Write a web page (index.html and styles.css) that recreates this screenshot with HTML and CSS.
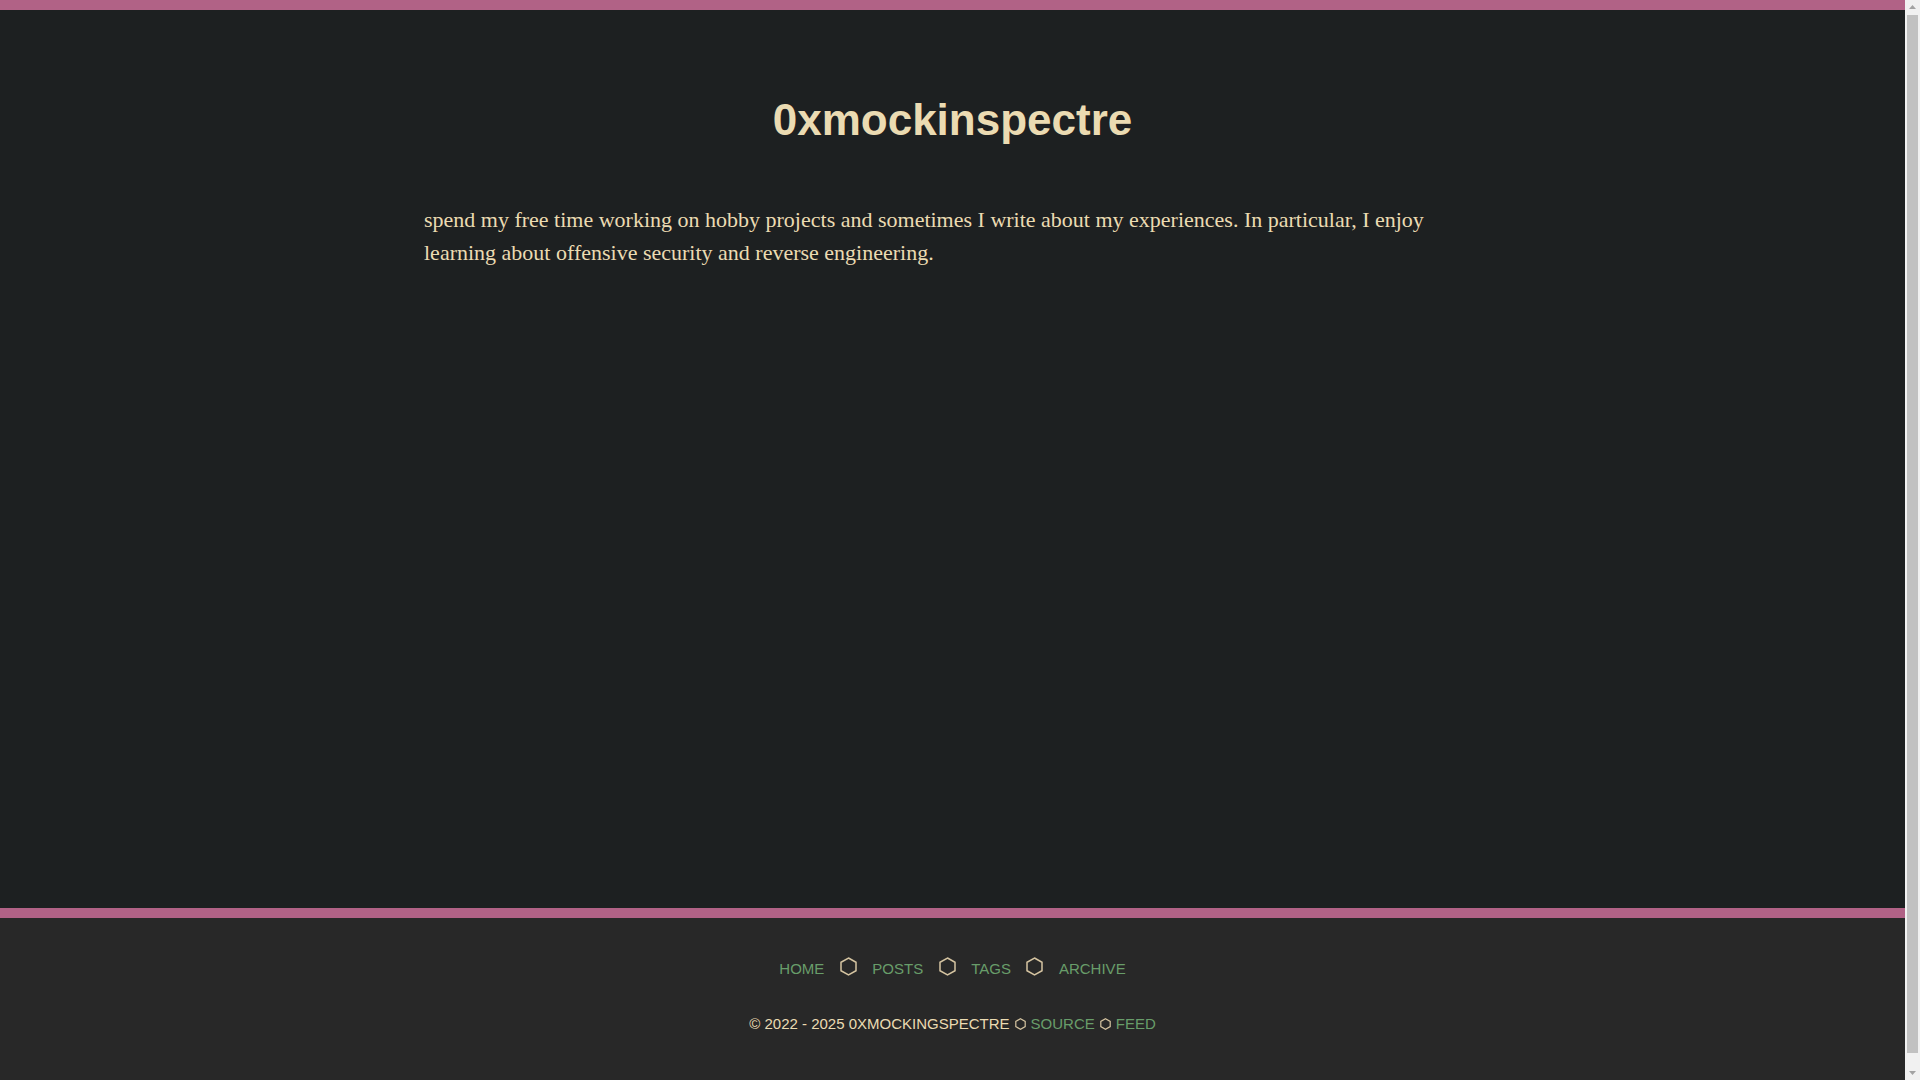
FILE: index.html
```html
<!DOCTYPE html>
<html lang="en">
<head>
<meta charset="utf-8">
<title>0xmockinspectre</title>
<link rel="stylesheet" href="styles.css">
</head>
<body>
<main class="main">
  <div class="container">
    <h1 class="site-title">0xmockinspectre</h1>
    <p class="intro">spend my free time working on hobby projects and sometimes I write about my experiences. In particular, I enjoy learning about offensive security and reverse engineering.</p>
  </div>
</main>
<footer class="footer">
  <nav class="nav">
    <a class="link" href="#">HOME</a>
    <svg class="hex hex-big" viewBox="0 0 17 19" aria-hidden="true"><polygon points="8.5,1 16,5.25 16,13.75 8.5,18 1,13.75 1,5.25"/></svg>
    <a class="link" href="#">POSTS</a>
    <svg class="hex hex-big" viewBox="0 0 17 19" aria-hidden="true"><polygon points="8.5,1 16,5.25 16,13.75 8.5,18 1,13.75 1,5.25"/></svg>
    <a class="link" href="#">TAGS</a>
    <svg class="hex hex-big" viewBox="0 0 17 19" aria-hidden="true"><polygon points="8.5,1 16,5.25 16,13.75 8.5,18 1,13.75 1,5.25"/></svg>
    <a class="link" href="#">ARCHIVE</a>
  </nav>
  <div class="copyright">
    <span class="copy-text">© 2022 - 2025 0XMOCKINGSPECTRE</span>
    <svg class="hex hex-small" viewBox="0 0 11 12" aria-hidden="true"><polygon points="5.5,0.8 10.2,3.4 10.2,8.6 5.5,11.2 0.8,8.6 0.8,3.4"/></svg>
    <a class="link" href="#">SOURCE</a>
    <svg class="hex hex-small" viewBox="0 0 11 12" aria-hidden="true"><polygon points="5.5,0.8 10.2,3.4 10.2,8.6 5.5,11.2 0.8,8.6 0.8,3.4"/></svg>
    <a class="link" href="#">FEED</a>
  </div>
</footer>
<div class="scrollbar" aria-hidden="true">
  <div class="sb-btn"><svg viewBox="0 0 15 15"><polygon points="7.5,5 11,9 4,9"/></svg></div>
  <div class="sb-track"><div class="sb-thumb"></div></div>
  <div class="sb-btn"><svg viewBox="0 0 15 15"><polygon points="4,6 11,6 7.5,10"/></svg></div>
</div>
</body>
</html>
```
FILE: styles.css
```css
html, body {
  margin: 0;
  padding: 0;
}

html {
  background: #f1f1f1;
}

body {
  margin-right: 15px;
  background: #1d2021;
  border-top: 10px solid #b16286;
  font-family: "Liberation Sans", Arial, sans-serif;
  color: #ebdbb2;
}

.main {
  min-height: 898px;
  box-sizing: border-box;
  padding-top: 85px;
}

.container {
  max-width: 1057px;
  margin: 0 auto;
}

.site-title {
  margin: 0;
  text-align: center;
  font-family: "Liberation Sans", Arial, sans-serif;
  font-weight: bold;
  font-size: 44px;
  line-height: normal;
  color: #ebdbb2;
}

.intro {
  margin: 58px 0 0;
  font-family: "Liberation Serif", "Times New Roman", serif;
  font-size: 22px;
  line-height: 33px;
  color: #ebdbb2;
}

.footer {
  background: #282828;
  border-top: 10px solid #b16286;
  padding: 39px 0 55px;
  font-size: 15px;
  line-height: 24px;
}

.nav {
  display: flex;
  justify-content: center;
  align-items: center;
  gap: 15.5px;
  height: 24px;
}

.link {
  color: #689d6a;
  text-decoration: none;
}

.hex {
  fill: none;
  stroke: #d5c4a1;
}

.hex-big {
  width: 17px;
  height: 19px;
  stroke-width: 1.5;
  margin-bottom: 5px;
}

.copyright {
  margin-top: 31px;
  display: flex;
  justify-content: center;
  align-items: center;
  height: 24px;
  color: #ebdbb2;
}

.hex-small {
  width: 11px;
  height: 12px;
  stroke-width: 1.2;
  margin: 0 5px 1px;
}

.scrollbar {
  position: fixed;
  top: 0;
  right: 0;
  width: 15px;
  height: 100vh;
  background: #f1f1f1;
  display: flex;
  flex-direction: column;
}

.sb-btn {
  height: 15px;
  flex: none;
}

.sb-btn svg {
  display: block;
  width: 15px;
  height: 15px;
  fill: #a3a3a3;
}

.sb-track {
  flex: 1;
  display: flex;
  padding: 0 2px 12px;
}

.sb-thumb {
  flex: 1;
  background: #c1c1c1;
}
```
